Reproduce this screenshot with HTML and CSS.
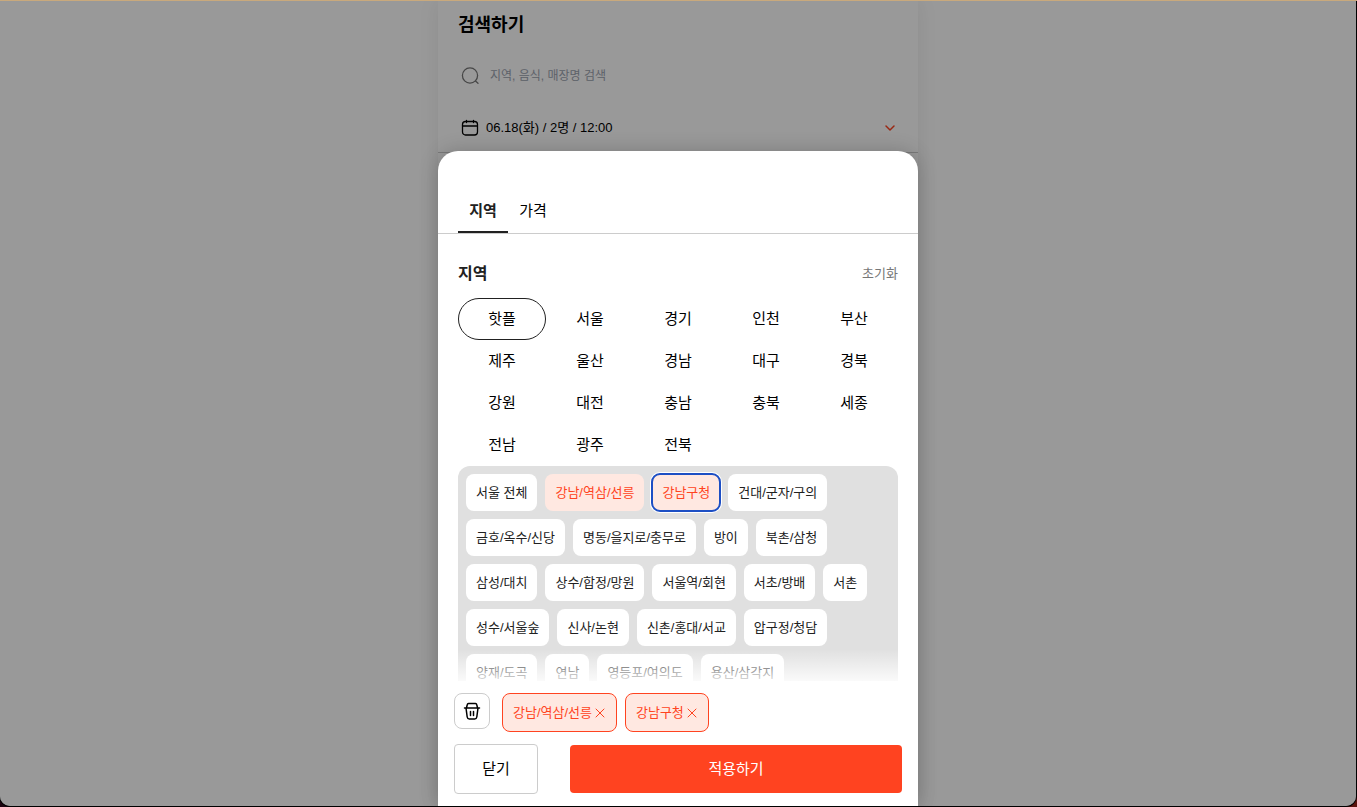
FILE: index.html
```html
<!DOCTYPE html>
<html lang="ko">
<head>
<meta charset="utf-8">
<meta name="viewport" content="width=device-width, initial-scale=1">
<title>검색하기</title>
<link rel="stylesheet" href="styles.css">
</head>
<body>
<div class="screen">
  <main class="page">
    <h1 class="page-title">검색하기</h1>
    <label class="search">
      <svg class="icon-search" viewBox="0 0 20 20" aria-hidden="true"><circle cx="10" cy="9.5" r="7.6"/><path d="M15.500 15l2.500 2.300"/></svg>
      <input class="search-input" type="search" placeholder="지역, 음식, 매장명 검색" aria-label="검색어">
    </label>
    <button class="schedule" type="button">
      <svg class="icon-calendar" viewBox="0 0 20 20" aria-hidden="true"><rect x="2.500" y="3.500" width="15" height="13.500" rx="3"/><path d="M2.500 8h15M6.500 2.500v2M13.500 2.500v2"/></svg>
      <span class="schedule-text">06.18(화) / 2명 / 12:00</span>
      <svg class="icon-chevron" viewBox="0 0 12 12" aria-hidden="true"><path d="M2 4l4 4 4-4"/></svg>
    </button>
  </main>

  <div class="overlay">
    <section class="sheet" role="dialog" aria-label="필터">
      <nav class="tabs" role="tablist">
        <button class="tab tab-active" type="button" role="tab" aria-selected="true">지역</button>
        <button class="tab" type="button" role="tab" aria-selected="false">가격</button>
      </nav>
      <div class="content">
        <div class="section-head">
          <h2 class="section-title">지역</h2>
          <button class="reset" type="button">초기화</button>
        </div>
        <div class="regions">
          <button class="region region-active" type="button">핫플</button>
          <button class="region" type="button">서울</button>
          <button class="region" type="button">경기</button>
          <button class="region" type="button">인천</button>
          <button class="region" type="button">부산</button>
          <button class="region" type="button">제주</button>
          <button class="region" type="button">울산</button>
          <button class="region" type="button">경남</button>
          <button class="region" type="button">대구</button>
          <button class="region" type="button">경북</button>
          <button class="region" type="button">강원</button>
          <button class="region" type="button">대전</button>
          <button class="region" type="button">충남</button>
          <button class="region" type="button">충북</button>
          <button class="region" type="button">세종</button>
          <button class="region" type="button">전남</button>
          <button class="region" type="button">광주</button>
          <button class="region" type="button">전북</button>
        </div>
        <div class="areas">
          <button class="chip" type="button">서울 전체</button>
          <button class="chip chip-on" type="button">강남/역삼/선릉</button>
          <button class="chip chip-on chip-focus" type="button">강남구청</button>
          <button class="chip" type="button">건대/군자/구의</button>
          <button class="chip" type="button">금호/옥수/신당</button>
          <button class="chip" type="button">명동/을지로/충무로</button>
          <button class="chip" type="button">방이</button>
          <button class="chip" type="button">북촌/삼청</button>
          <button class="chip" type="button">삼성/대치</button>
          <button class="chip" type="button">상수/합정/망원</button>
          <button class="chip" type="button">서울역/회현</button>
          <button class="chip" type="button">서초/방배</button>
          <button class="chip" type="button">서촌</button>
          <button class="chip" type="button">성수/서울숲</button>
          <button class="chip" type="button">신사/논현</button>
          <button class="chip" type="button">신촌/홍대/서교</button>
          <button class="chip" type="button">압구정/청담</button>
          <button class="chip" type="button">양재/도곡</button>
          <button class="chip" type="button">연남</button>
          <button class="chip" type="button">영등포/여의도</button>
          <button class="chip" type="button">용산/삼각지</button>
        </div>
      </div>
      <footer class="footer">
        <div class="selected">
          <button class="clear" type="button" aria-label="전체 삭제">
            <svg class="icon-trash" viewBox="0 0 20 20" aria-hidden="true"><path d="M2.500 7h15M4.500 6.800L5.300 3.500Q5.500 2.500 6.500 2.500h7Q14.500 2.500 14.700 3.500l.8 3.300M4 7l1.200 9Q5.500 18 7.300 18h5.400Q14.500 18 14.800 16L16 7M8.500 10.500v4M11.500 10.500v4"/></svg>
          </button>
          <button class="tag" type="button">강남/역삼/선릉<svg class="icon-x" viewBox="0 0 12 12" aria-hidden="true"><path d="M2 2l8 8M10 2l-8 8"/></svg></button>
          <button class="tag" type="button">강남구청<svg class="icon-x" viewBox="0 0 12 12" aria-hidden="true"><path d="M2 2l8 8M10 2l-8 8"/></svg></button>
        </div>
        <div class="actions">
          <button class="close" type="button">닫기</button>
          <button class="apply" type="button">적용하기</button>
        </div>
      </footer>
    </section>
  </div>
</div>
</body>
</html>
```
FILE: styles.css
```css
* { box-sizing: border-box; }

html, body { height: 100%; }

body {
  margin: 0;
  padding: 0 1px 1px 0;
  border-top: 1px solid #c9a97c;
  background: linear-gradient(90deg, #1c0410 0 20px, #000 20px calc(100% - 20px), #5a120c calc(100% - 20px));
  font-family: "Liberation Sans", "Noto Sans CJK KR", sans-serif;
  color: #000;
  overflow: hidden;
}

button, input { font: inherit; color: inherit; }

button {
  margin: 0;
  padding: 0;
  border: 0;
  background: none;
  cursor: pointer;
}

svg {
  flex: none;
  fill: none;
  stroke: currentColor;
  stroke-linecap: round;
  stroke-linejoin: round;
}

.screen {
  position: relative;
  height: 100%;
  overflow: hidden;
  border-radius: 0 0 10px 10px;
  background: #fff;
  box-shadow: 0 0 0 1px #000;
}

.page {
  display: flex;
  flex-direction: column;
  max-width: 480px;
  height: 100%;
  margin: 0 auto;
  box-shadow: 0 0 20px rgba(0, 0, 0, 0.08);
}

.page-title {
  margin: 0;
  padding: 0 20px;
  font-size: 18px;
  line-height: 48px;
  font-weight: 700;
}

.search {
  display: flex;
  align-items: center;
  gap: 10px;
  height: 54px;
  padding: 0 22px;
}

.icon-search {
  width: 20px;
  height: 20px;
  color: #777;
  stroke-width: 1.3;
}

.search-input {
  flex: 1;
  min-width: 0;
  padding: 0;
  border: 0;
  outline: 0;
  background: none;
  font-size: 12px;
  line-height: 20px;
}

.search-input::placeholder { color: #9ca3af; opacity: 1; }

.schedule {
  display: flex;
  align-items: center;
  gap: 6px;
  height: 50px;
  padding: 0 22px;
  border-bottom: 1px solid #ccc;
  text-align: left;
}

.schedule-text {
  flex: 1;
  font-size: 13px;
  line-height: 20px;
}

.icon-calendar { width: 20px; height: 20px; stroke-width: 1.3; }

.icon-chevron {
  width: 12px;
  height: 12px;
  color: #ff4320;
  stroke-width: 1.5;
}

.overlay {
  position: absolute;
  inset: 0;
  display: flex;
  flex-direction: column;
  align-items: center;
  padding-top: 150px;
  background: rgba(0, 0, 0, 0.4);
}

.sheet {
  display: flex;
  flex: 1;
  flex-direction: column;
  width: 100%;
  max-width: 480px;
  min-height: 0;
  border-radius: 20px 20px 0 0;
  background: #fff;
  box-shadow: 0 0 20px rgba(0, 0, 0, 0.2);
}

.tabs {
  display: flex;
  padding: 38px 20px 0;
  border-bottom: 1px solid #ccc;
}

.tab {
  width: 50px;
  height: 44px;
  padding-top: 2px;
  border-bottom: 2px solid transparent;
  font-size: 15px;
  line-height: 20px;
}

.tab-active {
  border-color: #212121;
  color: #212121;
  font-weight: 700;
}

.content {
  display: flex;
  flex: 1;
  flex-direction: column;
  min-height: 0;
  padding: 28px 20px 0;
}

.section-head {
  display: flex;
  align-items: center;
  justify-content: space-between;
  margin-bottom: 12px;
}

.section-title {
  margin: 0;
  font-size: 16px;
  line-height: 24px;
  font-weight: 700;
  color: #212121;
}

.reset {
  font-size: 13px;
  line-height: 24px;
  color: #777;
}

.regions {
  display: grid;
  grid-template-columns: repeat(5, 1fr);
}

.region {
  height: 42px;
  border-radius: 21px;
  font-size: 15px;
  line-height: 20px;
}

.region-active { border: 1px solid #212121; }

.areas {
  position: relative;
  display: flex;
  flex: 1;
  flex-wrap: wrap;
  align-content: flex-start;
  gap: 8px;
  min-height: 0;
  padding: 8px;
  overflow: hidden;
  border-radius: 12px 12px 0 0;
  background: #e0e0e0;
}

.areas::after {
  content: "";
  position: absolute;
  inset: auto 0 0;
  height: 32px;
  background: linear-gradient(rgba(255, 255, 255, 0), rgba(255, 255, 255, 0.85));
}

.chip {
  height: 37px;
  padding: 0 10px;
  border-radius: 8px;
  background: #fff;
  color: #212121;
  font-size: 13px;
  line-height: 20px;
  white-space: nowrap;
}

.chip-on { background: #ffe8e1; color: #ff4320; }

.chip-focus {
  outline: 2px solid #1d4fc4;
  outline-offset: -1px;
  box-shadow: 0 0 0 2px #fff;
}

.footer {
  display: flex;
  flex-direction: column;
  gap: 12px;
  padding: 12px 16px;
}

.selected {
  display: flex;
  align-items: flex-start;
  gap: 8px;
}

.clear {
  display: flex;
  align-items: center;
  justify-content: center;
  width: 36px;
  height: 36px;
  margin-right: 4px;
  border: 1px solid #ccc;
  border-radius: 8px;
}

.icon-trash { width: 20px; height: 20px; stroke-width: 1.5; }

.tag {
  display: flex;
  align-items: center;
  gap: 2px;
  height: 39px;
  padding: 0 10px;
  border: 1px solid #ff4320;
  border-radius: 8px;
  background: #ffe8e1;
  color: #ff4320;
  font-size: 13px;
  line-height: 20px;
  white-space: nowrap;
}

.icon-x { width: 12px; height: 12px; stroke-width: 1; }

.actions {
  display: flex;
  align-items: center;
  gap: 32px;
}

.close {
  width: 84px;
  height: 50px;
  border: 1px solid #ccc;
  border-radius: 4px;
  font-size: 15px;
  line-height: 20px;
}

.apply {
  flex: 1;
  height: 48px;
  border-radius: 4px;
  background: #ff4320;
  color: #fff;
  font-size: 15px;
  line-height: 20px;
}
```
